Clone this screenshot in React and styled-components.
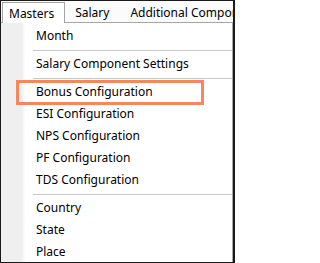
import React from 'react';
import styled, { createGlobalStyle } from 'styled-components';

const GlobalStyle = createGlobalStyle`
  html, body {
    margin: 0;
    padding: 0;
    background: #ffffff;
  }
  body {
    font-family: "Noto Sans", "Open Sans", sans-serif;
    font-size: 12px;
    color: #000;
  }
`;

const Frame = styled.div`
  position: relative;
  width: 235px;
  height: 263px;
  box-sizing: border-box;
  border: 1px solid #1a1a1a;
  border-right-width: 2px;
  background: #ffffff;
  overflow: hidden;
`;

const MenuBar = styled.div`
  display: flex;
  align-items: stretch;
  height: 21px;
  padding: 1px 0 0 1px;
  box-sizing: border-box;
  background: #fbfbfb;
  white-space: nowrap;
`;

const TopItem = styled.div`
  display: flex;
  align-items: center;
  padding-left: ${(p) => (p.$open ? '6px' : '9px')};
  padding-right: ${(p) => (p.$open ? '10px' : '10px')};
  box-sizing: border-box;
  border: 1px solid ${(p) => (p.$open ? '#a6a6a6' : 'transparent')};
  border-bottom: none;
  background: ${(p) => (p.$open ? '#ffffff' : 'transparent')};
  position: relative;
  z-index: 1;
  margin-bottom: ${(p) => (p.$open ? '-1px' : '0')};
`;

const Dropdown = styled.div`
  border-top: 1px solid #a6a6a6;
  border-right: 1px solid #a6a6a6;
  padding-top: 2px;
  background: linear-gradient(
    to right,
    #efefef 0,
    #efefef 21px,
    #f6f6f6 22px,
    #fcfcfc 24px,
    #ffffff 24px
  );
  height: 240px;
`;

const Item = styled.div`
  height: 22px;
  line-height: 22px;
  padding-left: 35px;
  white-space: nowrap;
`;

const Separator = styled.div`
  height: 6px;
  display: flex;
  align-items: center;
  padding-left: 32px;

  &::after {
    content: '';
    flex: 1;
    height: 1px;
    background: #c8c8c8;
  }
`;

const Highlight = styled.div`
  position: absolute;
  left: 15px;
  top: 79px;
  width: 188px;
  height: 25px;
  box-sizing: border-box;
  border: 3px solid #f4875f;
  pointer-events: none;
`;

const groups = [
  ['Month'],
  ['Salary Component Settings'],
  ['Bonus Configuration', 'ESI Configuration', 'NPS Configuration', 'PF Configuration', 'TDS Configuration'],
  ['Country', 'State', 'Place'],
];

export default function App() {
  return (
    <>
      <GlobalStyle />
      <Frame>
        <MenuBar>
          <TopItem $open>Masters</TopItem>
          <TopItem>Salary</TopItem>
          <TopItem>Additional Components</TopItem>
        </MenuBar>
        <Dropdown>
          {groups.map((group, gi) => (
            <React.Fragment key={gi}>
              {gi > 0 && <Separator />}
              {group.map((label) => (
                <Item key={label}>{label}</Item>
              ))}
            </React.Fragment>
          ))}
        </Dropdown>
        <Highlight />
      </Frame>
    </>
  );
}
